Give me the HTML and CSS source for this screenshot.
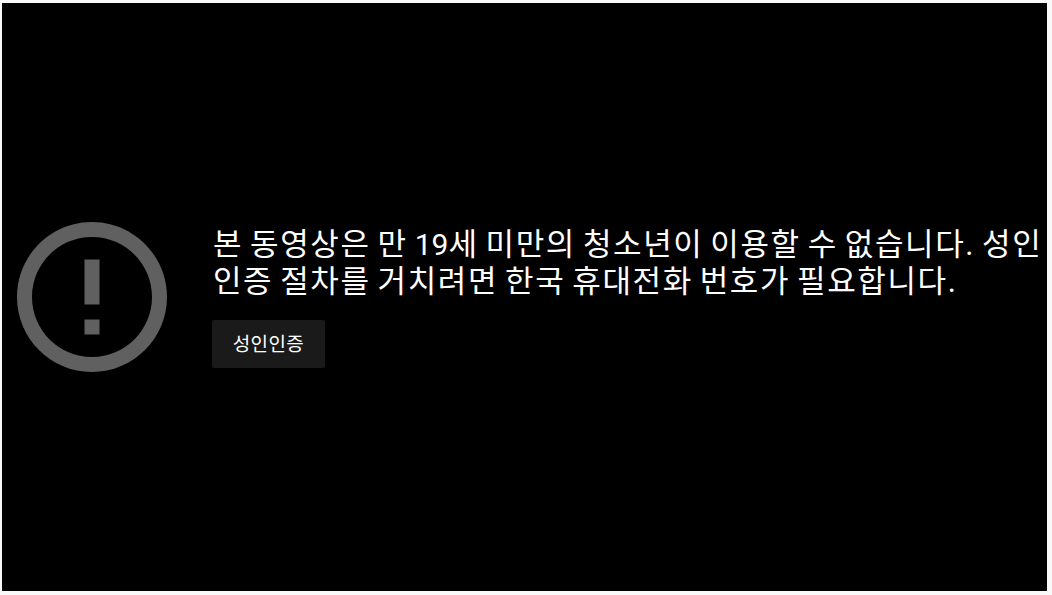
FILE: index.html
```html
<!DOCTYPE html>

<html lang="ko">

<head>
  <meta charset="UTF-8">
  <meta name="viewport" content="width=device-width, initial-scale=1">

  <title>성인인증</title>

  <link rel="stylesheet" href="styles.css">
</head>

<body>
  <div id="player">
    <svg class="error-icon" viewBox="2 2 20 20" aria-hidden="true">
      <path d="M11 15h2v2h-2zm0-8h2v6h-2zm.99-5C6.47 2 2 6.48 2 12s4.47 10 9.99 10C17.52 22 22 17.52 22 12S17.52 2 11.99 2zM12 20c-4.42 0-8-3.58-8-8s3.58-8 8-8 8 3.58 8 8-3.58 8-8 8z"/>
    </svg>
    <div class="error-content">
      <div class="reason">본 동영상은 만 <span class="age">19</span>세 미만의 청소년이 이용할 수 없습니다. 성인<br>인증 절차를 거치려면 한국 휴대전화 번호가 필요합니다.</div>
      <button type="button">성인인증</button>
    </div>
  </div>
</body>

</html>
```

FILE: styles.css
```css
html {
  height: 100%;
  background: #f9f9f9;
}

body {
  box-sizing: border-box;
  height: 100%;
  margin: 0;
  padding: 3px 5px 4px 2px;
  font-family: Roboto, "Noto Sans CJK KR", sans-serif;
}

#player {
  box-sizing: border-box;
  display: flex;
  align-items: center;
  height: 100%;
  padding-left: 15px;
  overflow: hidden;
  background: #000;
}

.error-icon {
  flex: none;
  width: 150px;
  height: 150px;
  margin-right: 45px;
  fill: #606060;
}

.error-content {
  flex: none;
  padding-bottom: 1px;

  .reason {
    margin-bottom: 20px;
    padding-left: 1px;
    color: #fff;
    font-size: 31px;
    line-height: 37px;
    letter-spacing: 1.6px;
    word-spacing: -2.3px;
    white-space: nowrap;
  }

  .age {
    font-size: 30px;
    letter-spacing: 0;
  }

  button {
    display: block;
    width: 113px;
    height: 48px;
    padding: 0 0 3px;
    border: 0;
    border-radius: 2px;
    background: #1a1a1a;
    color: #fff;
    font-family: inherit;
    font-size: 19px;
    letter-spacing: 0.4px;
  }
}
```
